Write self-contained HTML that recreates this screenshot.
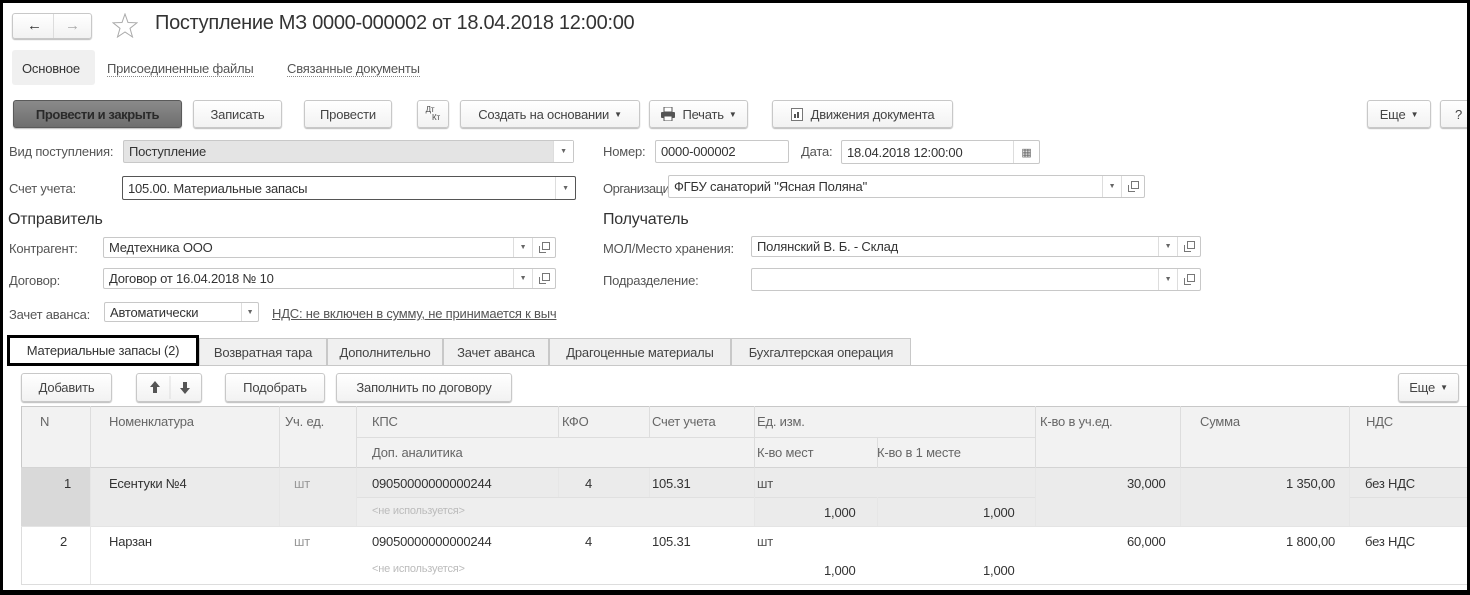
<!DOCTYPE html>
<html><head><meta charset="utf-8">
<style>
*{box-sizing:border-box;margin:0;padding:0}
body{width:1470px;height:595px;overflow:hidden;background:#fff;font-family:"Liberation Sans",Arial,sans-serif;font-size:13px;letter-spacing:-0.2px;color:#333;position:relative}
.frame{position:absolute;left:0;top:0;width:1470px;height:595px;border:3px solid #000;border-bottom-width:5px;z-index:50;pointer-events:none}
.a{position:absolute;white-space:nowrap}
.btn{position:absolute;border:1px solid #c8c8c8;border-radius:3px;background:linear-gradient(#fff,#f2f2f2);box-shadow:0 1px 1px #bbb;display:flex;align-items:center;justify-content:center;color:#444;white-space:nowrap}
.fld{position:absolute;border:1px solid #c8c8c8;border-radius:2px;background:#fff;padding-left:5px;display:flex;align-items:center;color:#333;white-space:nowrap}
.dd{position:absolute;top:0;bottom:0;width:20px;border-left:1px solid #ddd;display:flex;align-items:center;justify-content:center;font-size:7px;color:#666}
.op{position:absolute;top:0;bottom:0;width:22px;display:flex;align-items:center;justify-content:center}
.lbl{position:absolute;color:#555;white-space:nowrap}
.tab{position:absolute;top:338px;height:27px;border:1px solid #c8c8c8;border-bottom:none;background:#f0f0f0;display:flex;align-items:center;justify-content:center;color:#444;white-space:nowrap}
.c{position:absolute;white-space:nowrap;color:#444}
.h{color:#666}
.vl{position:absolute;width:1px;background:#ddd}
.hl{position:absolute;height:1px;background:#ddd}
</style></head><body>
<div class="frame"></div>

<div class="btn" style="left:12px;top:13px;width:80px;height:26px;border-radius:3px">
 <span style="position:absolute;left:14px;top:3px;font-size:15px;color:#333">&#8592;</span>
 <span style="position:absolute;left:40px;top:0;bottom:0;width:1px;background:#ddd"></span>
 <span style="position:absolute;left:52px;top:3px;font-size:15px;color:#aaa">&#8594;</span>
</div>
<svg class="a" style="left:112px;top:13px" width="26" height="25" viewBox="0 0 26 25"><path d="M13 1 L16 9.5 L25 9.8 L18 15.3 L20.5 24 L13 19 L5.5 24 L8 15.3 L1 9.8 L10 9.5 Z" fill="none" stroke="#aaa" stroke-width="1"/></svg>
<div class="a" style="left:155px;top:12px;font-size:20px;color:#333;letter-spacing:-0.3px">Поступление МЗ 0000-000002 от 18.04.2018 12:00:00</div>

<div class="a" style="left:12px;top:50px;width:83px;height:35px;background:#f0f0f0;border-radius:3px"></div>
<div class="a" style="left:22px;top:61px;color:#333">Основное</div>
<div class="a" style="left:107px;top:61px;color:#555;border-bottom:1px dotted #888">Присоединенные файлы</div>
<div class="a" style="left:287px;top:61px;color:#555;border-bottom:1px dotted #888">Связанные документы</div>

<div class="btn" style="left:13px;top:100px;width:169px;height:28px;background:linear-gradient(#8a8a8a,#6e6e6e);border-color:#5a5a5a;color:#2a2a2a;font-weight:bold;letter-spacing:-0.4px">Провести и закрыть</div>
<div class="btn" style="left:193px;top:100px;width:89px;height:28px">Записать</div>
<div class="btn" style="left:304px;top:100px;width:88px;height:28px">Провести</div>
<div class="btn" style="left:417px;top:100px;width:32px;height:28px;font-size:8px;line-height:8px;flex-direction:column"><span style="margin-left:-6px">Дт</span><span style="margin-left:6px">Кт</span></div>
<div class="btn" style="left:460px;top:100px;width:180px;height:28px">Создать на основании <span style="font-size:8px;margin-left:5px">&#9660;</span></div>
<div class="btn" style="left:649px;top:100px;width:99px;height:28px"><svg width="16" height="14" viewBox="0 0 16 14" style="margin-right:6px"><rect x="4" y="0" width="8" height="5" fill="#fff" stroke="#555"/><rect x="1" y="5" width="14" height="6" rx="1" fill="#555"/><rect x="4" y="9" width="8" height="5" fill="#fff" stroke="#555"/></svg>Печать <span style="font-size:8px;margin-left:5px">&#9660;</span></div>
<div class="btn" style="left:772px;top:100px;width:181px;height:28px"><svg width="12" height="13" viewBox="0 0 12 13" style="margin-right:8px"><rect x="0.5" y="0.5" width="11" height="12" fill="#fff" stroke="#777"/><rect x="3" y="6" width="2" height="4" fill="#555"/><rect x="6" y="4" width="2" height="6" fill="#555"/></svg>Движения документа</div>
<div class="btn" style="left:1367px;top:100px;width:64px;height:28px">Еще <span style="font-size:8px;margin-left:5px">&#9660;</span></div>
<div class="btn" style="left:1440px;top:100px;width:40px;height:28px;justify-content:flex-start;padding-left:14px">?</div>

<div class="lbl" style="left:9px;top:144px">Вид поступления:</div>
<div class="fld" style="left:123px;top:140px;width:451px;height:23px;background:#e4e4e4">Поступление<div class="dd" style="right:0;background:#fff">&#9660;</div></div>
<div class="lbl" style="left:603px;top:144px">Номер:</div>
<div class="fld" style="left:655px;top:140px;width:134px;height:23px">0000-000002</div>
<div class="lbl" style="left:801px;top:144px">Дата:</div>
<div class="fld" style="left:841px;top:140px;width:199px;height:24px">18.04.2018 12:00:00<div class="dd" style="right:0;width:26px;font-size:11px">&#9638;</div></div>

<div class="lbl" style="left:9px;top:181px">Счет учета:</div>
<div class="fld" style="left:122px;top:176px;width:454px;height:24px;border-color:#555">105.00. Материальные запасы<div class="dd" style="right:0">&#9660;</div></div>
<div class="lbl" style="left:603px;top:181px;letter-spacing:-0.5px">Организация:</div>
<div class="fld" style="left:668px;top:175px;width:477px;height:23px">ФГБУ санаторий "Ясная Поляна"<div class="dd" style="right:22px;border-right:1px solid #ddd">&#9660;</div><div class="op" style="right:0"><svg width="11" height="11" viewBox="0 0 11 11"><rect x="3.5" y="0.5" width="7" height="7" fill="none" stroke="#777"/><path d="M0.5 4 V10.5 H7" fill="none" stroke="#777"/></svg></div></div>

<div class="a" style="left:8px;top:211px;font-size:16px;color:#333">Отправитель</div>
<div class="a" style="left:603px;top:211px;font-size:16px;color:#333">Получатель</div>

<div class="lbl" style="left:9px;top:241px">Контрагент:</div>
<div class="fld" style="left:103px;top:237px;width:453px;height:21px">Медтехника ООО<div class="dd" style="right:22px;border-right:1px solid #ddd">&#9660;</div><div class="op" style="right:0"><svg width="11" height="11" viewBox="0 0 11 11"><rect x="3.5" y="0.5" width="7" height="7" fill="none" stroke="#777"/><path d="M0.5 4 V10.5 H7" fill="none" stroke="#777"/></svg></div></div>
<div class="lbl" style="left:603px;top:241px">МОЛ/Место хранения:</div>
<div class="fld" style="left:751px;top:236px;width:450px;height:21px">Полянский В. Б. - Склад<div class="dd" style="right:22px;border-right:1px solid #ddd">&#9660;</div><div class="op" style="right:0"><svg width="11" height="11" viewBox="0 0 11 11"><rect x="3.5" y="0.5" width="7" height="7" fill="none" stroke="#777"/><path d="M0.5 4 V10.5 H7" fill="none" stroke="#777"/></svg></div></div>

<div class="lbl" style="left:9px;top:273px">Договор:</div>
<div class="fld" style="left:103px;top:268px;width:453px;height:21px">Договор от 16.04.2018 № 10<div class="dd" style="right:22px;border-right:1px solid #ddd">&#9660;</div><div class="op" style="right:0"><svg width="11" height="11" viewBox="0 0 11 11"><rect x="3.5" y="0.5" width="7" height="7" fill="none" stroke="#777"/><path d="M0.5 4 V10.5 H7" fill="none" stroke="#777"/></svg></div></div>
<div class="lbl" style="left:603px;top:273px">Подразделение:</div>
<div class="fld" style="left:751px;top:268px;width:450px;height:23px"><div class="dd" style="right:22px;border-right:1px solid #ddd">&#9660;</div><div class="op" style="right:0"><svg width="11" height="11" viewBox="0 0 11 11"><rect x="3.5" y="0.5" width="7" height="7" fill="none" stroke="#777"/><path d="M0.5 4 V10.5 H7" fill="none" stroke="#777"/></svg></div></div>

<div class="lbl" style="left:9px;top:307px">Зачет аванса:</div>
<div class="fld" style="left:104px;top:302px;width:155px;height:20px">Автоматически<div class="dd" style="right:0;width:17px">&#9660;</div></div>
<div class="a" style="left:272px;top:306px;color:#555;text-decoration:underline">НДС: не включен в сумму, не принимается к выч</div>

<div class="tab" style="left:199px;width:128px">Возвратная тара</div>
<div class="tab" style="left:327px;width:116px">Дополнительно</div>
<div class="tab" style="left:443px;width:106px">Зачет аванса</div>
<div class="tab" style="left:549px;width:182px">Драгоценные материалы</div>
<div class="tab" style="left:731px;width:180px">Бухгалтерская операция</div>
<div class="a" style="left:7px;top:365px;width:1463px;height:1px;background:#c8c8c8"></div>
<div class="a" style="left:7px;top:335px;width:192px;height:31px;border:3px solid #000;background:#fff;display:flex;align-items:center;justify-content:center;color:#333;z-index:5">Материальные запасы (2)</div>

<div class="btn" style="left:21px;top:373px;width:91px;height:29px">Добавить</div>
<div class="btn" style="left:136px;top:373px;width:66px;height:29px">
 <svg width="66" height="27" viewBox="0 0 66 27" style="position:absolute;left:0;top:0"><path d="M18 7 L23 13 H20 V19 H16 V13 H13 Z" fill="#555"/><line x1="33" y1="2" x2="33" y2="25" stroke="#ddd"/><path d="M48 20 L53 14 H50 V8 H46 V14 H43 Z" fill="#555"/></svg></div>
<div class="btn" style="left:225px;top:373px;width:100px;height:29px">Подобрать</div>
<div class="btn" style="left:336px;top:373px;width:176px;height:29px">Заполнить по договору</div>
<div class="btn" style="left:1398px;top:373px;width:61px;height:29px">Еще <span style="font-size:8px;margin-left:5px">&#9660;</span></div>

<div class="a" style="left:21px;top:406px;width:1449px;height:62px;background:#f2f2f2;border-top:1px solid #c8c8c8;border-left:1px solid #c8c8c8"></div>
<div class="a" style="left:21px;top:468px;width:1449px;height:58px;background:#ebebeb"></div>
<div class="a" style="left:21px;top:468px;width:69px;height:58px;background:#d9d9d9"></div>
<div class="a" style="left:356px;top:498px;width:398px;height:28px;background:#eeeeee"></div>
<div class="a" style="left:21px;top:526px;width:1px;height:59px;background:#ddd"></div>
<div class="hl" style="left:21px;top:584px;width:1449px"></div>
<div class="hl" style="left:356px;top:437px;width:679px"></div>
<div class="hl" style="left:21px;top:467px;width:1449px;background:#d4d4d4"></div>
<div class="hl" style="left:21px;top:526px;width:1449px;background:#e4e4e4"></div>
<div class="hl" style="left:356px;top:497px;width:679px;background:#e0e0e0"></div>
<div class="hl" style="left:1349px;top:497px;width:121px;background:#e0e0e0"></div>
<div class="vl" style="left:90px;top:406px;height:62px"></div>
<div class="vl" style="left:279px;top:406px;height:62px"></div>
<div class="vl" style="left:356px;top:406px;height:62px"></div>
<div class="vl" style="left:558px;top:406px;height:31px"></div>
<div class="vl" style="left:649px;top:406px;height:31px"></div>
<div class="vl" style="left:754px;top:406px;height:62px"></div>
<div class="vl" style="left:877px;top:437px;height:31px"></div>
<div class="vl" style="left:1035px;top:406px;height:62px"></div>
<div class="vl" style="left:1180px;top:406px;height:62px"></div>
<div class="vl" style="left:1349px;top:406px;height:62px"></div>
<div class="vl" style="left:90px;top:468px;height:116px;background:#e6e6e6"></div>
<div class="vl" style="left:279px;top:468px;height:58px;background:#e6e6e6"></div>
<div class="vl" style="left:356px;top:468px;height:58px;background:#e6e6e6"></div>
<div class="vl" style="left:558px;top:468px;height:29px;background:#e6e6e6"></div>
<div class="vl" style="left:649px;top:468px;height:29px;background:#e6e6e6"></div>
<div class="vl" style="left:754px;top:468px;height:58px;background:#e6e6e6"></div>
<div class="vl" style="left:877px;top:497px;height:29px;background:#e6e6e6"></div>
<div class="vl" style="left:1035px;top:468px;height:58px;background:#e6e6e6"></div>
<div class="vl" style="left:1180px;top:468px;height:58px;background:#e6e6e6"></div>
<div class="vl" style="left:1349px;top:468px;height:58px;background:#e6e6e6"></div>

<div class="c h" style="left:40px;top:414px">N</div>
<div class="c h" style="left:109px;top:414px">Номенклатура</div>
<div class="c h" style="left:285px;top:414px">Уч. ед.</div>
<div class="c h" style="left:372px;top:414px">КПС</div>
<div class="c h" style="left:562px;top:414px">КФО</div>
<div class="c h" style="left:652px;top:414px">Счет учета</div>
<div class="c h" style="left:757px;top:414px">Ед. изм.</div>
<div class="c h" style="left:1040px;top:414px">К-во в уч.ед.</div>
<div class="c h" style="left:1200px;top:414px">Сумма</div>
<div class="c h" style="left:1366px;top:414px">НДС</div>
<div class="c h" style="left:372px;top:445px">Доп. аналитика</div>
<div class="c h" style="left:757px;top:445px">К-во мест</div>
<div class="c h" style="left:877px;top:445px">К-во в 1 месте</div>

<div class="c" style="left:64px;top:476px;color:#333">1</div>
<div class="c" style="left:109px;top:476px;color:#333">Есентуки №4</div>
<div class="c" style="left:294px;top:476px;color:#999">шт</div>
<div class="c" style="left:372px;top:476px;color:#333">09050000000000244</div>
<div class="c" style="left:585px;top:476px;color:#333">4</div>
<div class="c" style="left:652px;top:476px;color:#333">105.31</div>
<div class="c" style="left:757px;top:476px;color:#555">шт</div>
<div class="c" style="left:1127px;top:476px;color:#333">30,000</div>
<div class="c" style="left:1286px;top:476px;color:#333">1 350,00</div>
<div class="c" style="left:1365px;top:476px;color:#333">без НДС</div>
<div class="c" style="left:372px;top:505px;color:#bbb;font-size:11px">&lt;не используется&gt;</div>
<div class="c" style="left:824px;top:505px;color:#333">1,000</div>
<div class="c" style="left:983px;top:505px;color:#333">1,000</div>

<div class="c" style="left:60px;top:534px;color:#333">2</div>
<div class="c" style="left:109px;top:534px;color:#333">Нарзан</div>
<div class="c" style="left:294px;top:534px;color:#999">шт</div>
<div class="c" style="left:372px;top:534px;color:#333">09050000000000244</div>
<div class="c" style="left:585px;top:534px;color:#333">4</div>
<div class="c" style="left:652px;top:534px;color:#333">105.31</div>
<div class="c" style="left:757px;top:534px;color:#555">шт</div>
<div class="c" style="left:1127px;top:534px;color:#333">60,000</div>
<div class="c" style="left:1286px;top:534px;color:#333">1 800,00</div>
<div class="c" style="left:1365px;top:534px;color:#333">без НДС</div>
<div class="c" style="left:372px;top:563px;color:#bbb;font-size:11px">&lt;не используется&gt;</div>
<div class="c" style="left:824px;top:563px;color:#333">1,000</div>
<div class="c" style="left:983px;top:563px;color:#333">1,000</div>
</body></html>
